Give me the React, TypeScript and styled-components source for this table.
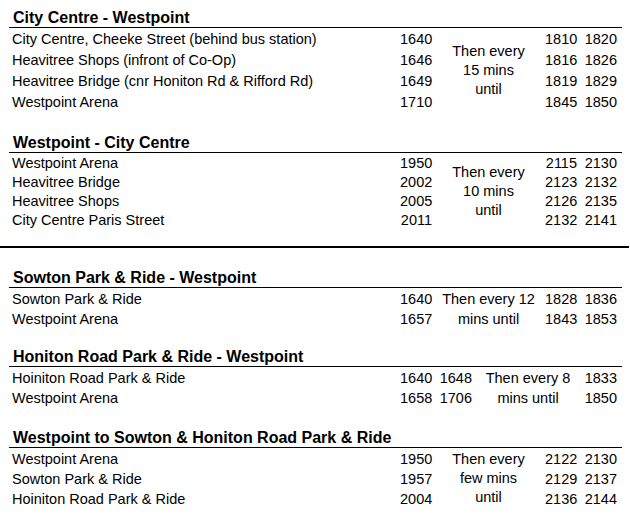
import React from "react";
import styled, { createGlobalStyle } from "styled-components";

const Global = createGlobalStyle`
  html, body { margin: 0; padding: 0; background: #fff; }
  body { font-family: "Liberation Sans", Arial, sans-serif; color: #000; }
`;

const Page = styled.div`
  width: 630px;
  padding-top: 8px;
  display: flex;
  flex-direction: column;
`;

const Section = styled.section<{ $above: number }>`
  margin-top: ${(p) => p.$above}px;
  margin-left: 9px;
  width: 613px;
  display: flex;
  flex-direction: column;
`;

const Title = styled.h2`
  margin: 0;
  padding-left: 4px;
  font-size: 16px;
  font-weight: bold;
  line-height: 19px;
  border-bottom: 1px solid #000;
`;

const Grid = styled.div<{ $cols: string; $row: number }>`
  display: grid;
  grid-template-columns: ${(p) => p.$cols};
  grid-auto-rows: ${(p) => p.$row}px;
  padding-top: 1px;
  padding-left: 3px;
  font-size: 14.5px;
  line-height: ${(p) => p.$row}px;
`;

const Name = styled.div`
  white-space: nowrap;
`;

const Time = styled.div`
  text-align: right;
  white-space: nowrap;
`;

const Middle = styled.div<{ $col: number; $span: number; $lh: number; $lift: number }>`
  grid-column: ${(p) => p.$col};
  grid-row: 1 / span ${(p) => p.$span};
  align-self: center;
  margin-bottom: ${(p) => p.$lift}px;
  text-align: center;
  line-height: ${(p) => p.$lh}px;
  white-space: nowrap;
`;

const Divider = styled.hr`
  margin: 16px 0 0;
  border: 0;
  height: 2px;
  width: 629px;
  background: #000;
`;

type Sec = {
  title: string;
  above: number;
  row: number;
  cols: string;
  midCol: number;
  midLh: number;
  middle: string[];
  rows: string[][];
};

const STD = "388px 32px 113px 32px 40px";
const ALT = "388px 32px 40px 112px 33px";

const top: Sec[] = [
  {
    title: "City Centre - Westpoint",
    above: 0,
    row: 21,
    cols: STD,
    midCol: 3,
    midLh: 19,
    middle: ["Then every", "15 mins", "until"],
    rows: [
      ["City Centre, Cheeke Street (behind bus station)", "1640", "1810", "1820"],
      ["Heavitree Shops (infront of Co-Op)", "1646", "1816", "1826"],
      ["Heavitree Bridge (cnr Honiton Rd & Rifford Rd)", "1649", "1819", "1829"],
      ["Westpoint Arena", "1710", "1845", "1850"],
    ],
  },
  {
    title: "Westpoint - City Centre",
    above: 20,
    row: 19,
    cols: STD,
    midCol: 3,
    midLh: 19,
    middle: ["Then every", "10 mins", "until"],
    rows: [
      ["Westpoint Arena", "1950", "2115", "2130"],
      ["Heavitree Bridge", "2002", "2123", "2132"],
      ["Heavitree Shops", "2005", "2126", "2135"],
      ["City Centre Paris Street", "2011", "2132", "2141"],
    ],
  },
];

const bottom: Sec[] = [
  {
    title: "Sowton Park & Ride - Westpoint",
    above: 20,
    row: 20,
    cols: STD,
    midCol: 3,
    midLh: 20,
    middle: ["Then every 12", "mins until"],
    rows: [
      ["Sowton Park & Ride", "1640", "1828", "1836"],
      ["Westpoint Arena", "1657", "1843", "1853"],
    ],
  },
  {
    title: "Honiton Road Park & Ride - Westpoint",
    above: 18,
    row: 20,
    cols: ALT,
    midCol: 4,
    midLh: 20,
    middle: ["Then every 8", "mins until"],
    rows: [
      ["Hoiniton Road Park & Ride", "1640", "1648", "1833"],
      ["Westpoint Arena", "1658", "1706", "1850"],
    ],
  },
  {
    title: "Westpoint to Sowton & Honiton Road Park & Ride",
    above: 20,
    row: 20,
    cols: STD,
    midCol: 3,
    midLh: 19,
    middle: ["Then every", "few mins", "until"],
    rows: [
      ["Westpoint Arena", "1950", "2122", "2130"],
      ["Sowton Park & Ride", "1957", "2129", "2137"],
      ["Hoiniton Road Park & Ride", "2004", "2136", "2144"],
    ],
  },
];

function Timetable({ s }: { s: Sec }) {
  return (
    <Section $above={s.above}>
      <Title>{s.title}</Title>
      <Grid $cols={s.cols} $row={s.row}>
        <Middle
          $col={s.midCol}
          $span={s.rows.length}
          $lh={s.midLh}
          $lift={s.middle.length > 2 ? 2 : 0}
        >
          {s.middle.map((l, i) => (
            <div key={i}>{l}</div>
          ))}
        </Middle>
        {s.rows.map((r, i) => (
          <React.Fragment key={i}>
            <Name>{r[0]}</Name>
            <Time>{r[1]}</Time>
            <Time>{r[2]}</Time>
            <Time>{r[3]}</Time>
          </React.Fragment>
        ))}
      </Grid>
    </Section>
  );
}

export default function App() {
  return (
    <>
      <Global />
      <Page>
        {top.map((s, i) => (
          <Timetable key={i} s={s} />
        ))}
        <Divider />
        {bottom.map((s, i) => (
          <Timetable key={i} s={s} />
        ))}
      </Page>
    </>
  );
}
